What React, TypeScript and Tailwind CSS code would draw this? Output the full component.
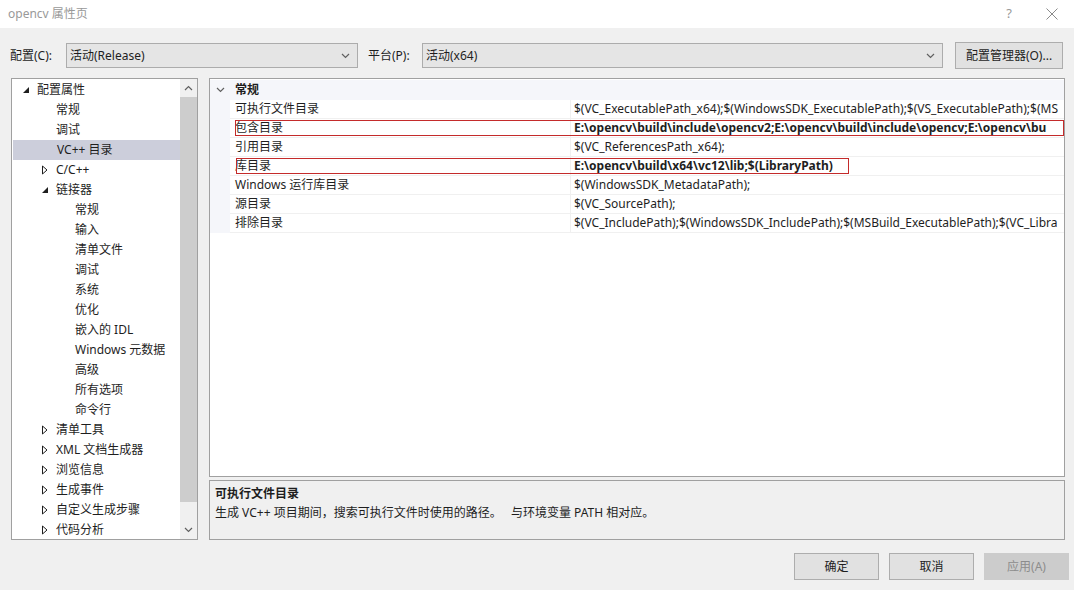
import React from "react";

type TreeItem = {
  label: string;
  level: 0 | 1 | 2;
  toggle?: "open" | "closed";
  selected?: boolean;
};

const treeItems: TreeItem[] = [
  { label: "配置属性", level: 0, toggle: "open" },
  { label: "常规", level: 1 },
  { label: "调试", level: 1 },
  { label: "VC++ 目录", level: 1, selected: true },
  { label: "C/C++", level: 1, toggle: "closed" },
  { label: "链接器", level: 1, toggle: "open" },
  { label: "常规", level: 2 },
  { label: "输入", level: 2 },
  { label: "清单文件", level: 2 },
  { label: "调试", level: 2 },
  { label: "系统", level: 2 },
  { label: "优化", level: 2 },
  { label: "嵌入的 IDL", level: 2 },
  { label: "Windows 元数据", level: 2 },
  { label: "高级", level: 2 },
  { label: "所有选项", level: 2 },
  { label: "命令行", level: 2 },
  { label: "清单工具", level: 1, toggle: "closed" },
  { label: "XML 文档生成器", level: 1, toggle: "closed" },
  { label: "浏览信息", level: 1, toggle: "closed" },
  { label: "生成事件", level: 1, toggle: "closed" },
  { label: "自定义生成步骤", level: 1, toggle: "closed" },
  { label: "代码分析", level: 1, toggle: "closed" },
];

type Prop = { name: string; value: string; bold?: boolean; mark?: "full" | "short" };

// values are cut where the grid's edge cuts them in the dialog
const props: Prop[] = [
  { name: "可执行文件目录", value: "$(VC_ExecutablePath_x64);$(WindowsSDK_ExecutablePath);$(VS_ExecutablePath);$(MS" },
  {
    name: "包含目录",
    value: "E:\\opencv\\build\\include\\opencv2;E:\\opencv\\build\\include\\opencv;E:\\opencv\\bu",
    bold: true,
    mark: "full",
  },
  { name: "引用目录", value: "$(VC_ReferencesPath_x64);" },
  { name: "库目录", value: "E:\\opencv\\build\\x64\\vc12\\lib;$(LibraryPath)", bold: true, mark: "short" },
  { name: "Windows 运行库目录", value: "$(WindowsSDK_MetadataPath);" },
  { name: "源目录", value: "$(VC_SourcePath);" },
  { name: "排除目录", value: "$(VC_IncludePath);$(WindowsSDK_IncludePath);$(MSBuild_ExecutablePath);$(VC_Libra" },
];

const indent = ["pl-[10px]", "pl-[29px]", "pl-[48px]"];

function Chevron({ up = false }: { up?: boolean }) {
  return (
    <svg width="9" height="6" viewBox="0 0 9 6" fill="none" stroke="#606060" strokeWidth="1.2">
      <path d={up ? "M1 5 L4.5 1.5 L8 5" : "M1 1 L4.5 4.5 L8 1"} />
    </svg>
  );
}

function Combo({ value, className }: { value: string; className: string }) {
  return (
    <div className={`flex h-[25px] shrink-0 items-center justify-between border border-[#acacac] bg-[#e5e5e5] pl-[3px] pr-[7px] ${className}`}>
      <span>{value}</span>
      <Chevron />
    </div>
  );
}

function TreeToggle({ kind }: { kind?: "open" | "closed" }) {
  if (kind === "open")
    return (
      <svg width="8" height="8" viewBox="0 0 8 8">
        <path d="M7 1 L7 7 L1 7 Z" fill="#1e1e1e" />
      </svg>
    );
  if (kind === "closed")
    return (
      <svg width="8" height="10" viewBox="0 0 8 10">
        <path d="M1.5 1 L6 5 L1.5 9 Z" fill="none" stroke="#1e1e1e" strokeWidth="1" />
      </svg>
    );
  return null;
}

function Button({ label, disabled = false }: { label: string; disabled?: boolean }) {
  return (
    <div
      className={`flex h-[27px] w-[85px] items-center justify-center border ${
        disabled ? "border-[#cccccc] bg-[#cccccc] text-[#8c8c8c]" : "border-[#adadad] bg-[#e1e1e1] text-[#1e1e1e]"
      }`}
    >
      {label}
    </div>
  );
}

export default function App() {
  return (
    <div
      className="flex h-[590px] w-[1074px] flex-col overflow-hidden bg-[#f0f0f0] text-[12px] text-[#1e1e1e]"
      style={{ fontFamily: '"Noto Sans", "Noto Sans CJK SC", sans-serif' }}
    >
      {/* title bar */}
      <div className="flex h-[28px] shrink-0 items-center justify-between bg-white pl-[8px] pr-[16px] text-[#999999]">
        <span>opencv 属性页</span>
        <div className="flex items-center gap-[34px]">
          <span className="text-[13px]">?</span>
          <svg width="12" height="12" viewBox="0 0 12 12" stroke="#8a8a8a" strokeWidth="1">
            <path d="M0.5 0.5 L11.5 11.5 M11.5 0.5 L0.5 11.5" />
          </svg>
        </div>
      </div>

      {/* config row */}
      <div className="mt-[14px] flex h-[27px] shrink-0 items-center pl-[10px]">
        <span className="w-[56px] shrink-0">配置(C):</span>
        <Combo value="活动(Release)" className="w-[292px]" />
        <span className="ml-[10px] w-[54px] shrink-0">平台(P):</span>
        <Combo value="活动(x64)" className="w-[521px]" />
        <div className="ml-[12px] flex h-[27px] w-[108px] shrink-0 items-center justify-center border border-[#adadad] bg-[#e1e1e1]">
          配置管理器(O)...
        </div>
      </div>

      {/* main */}
      <div className="mt-[9px] flex h-[462px] shrink-0 gap-[11px] pl-[11px] pr-[9px]">
        {/* tree */}
        <div className="flex w-[187px] shrink-0 border border-[#a0a0a0] bg-white">
          <div className="min-w-0 flex-1 overflow-hidden pt-[1px]">
            {treeItems.map((it, i) => (
              <div
                key={i}
                className={`flex h-[20px] items-center ${indent[it.level]} ${it.selected ? "ml-[1px] bg-[#cccedb]" : ""}`}
              >
                <span className="flex w-[15px] shrink-0 items-center">
                  <TreeToggle kind={it.toggle} />
                </span>
                <span className="whitespace-nowrap">{it.label}</span>
              </div>
            ))}
          </div>
          <div className="flex w-[17px] shrink-0 flex-col items-center bg-[#f0f0f0]">
            <div className="flex h-[18px] items-center">
              <Chevron up />
            </div>
            <div className="h-[405px] w-[17px] bg-[#cdcdcd]" />
            <div className="flex-1" />
            <div className="flex h-[18px] items-center">
              <Chevron />
            </div>
          </div>
        </div>

        {/* right column */}
        <div className="flex min-w-0 flex-1 flex-col gap-[3px]">
          <div className="h-[399px] overflow-hidden border border-[#a0a0a0] bg-white pt-[1px]">
            <div className="flex h-[20px] items-center bg-[#f5f6fa]">
              <span className="flex w-[20px] justify-center">
                <Chevron />
              </span>
              <span className="pl-[5px] font-bold">常规</span>
            </div>
            <div className="flex">
              <div className="w-[20px] shrink-0 bg-[#f5f6fa]" />
              <div className="min-w-0 flex-1">
                {props.map((p, i) => (
                  <div key={i} className="relative flex h-[19px] items-center border-b border-[#f0f0f0]">
                    <div className="w-[340px] shrink-0 whitespace-nowrap pl-[5px]">{p.name}</div>
                    <div
                      className={`min-w-0 flex-1 overflow-hidden whitespace-nowrap border-l border-[#f0f0f0] pl-[3px] ${
                        p.bold ? "font-bold" : ""
                      }`}
                    >
                      {p.value}
                    </div>
                    {p.mark === "full" && (
                      <div className="absolute left-[5px] right-0 top-[1px] h-[16px] border border-[#c42b2b]" />
                    )}
                    {p.mark === "short" && (
                      <div className="absolute left-[6px] top-[1px] h-[16px] w-[613px] border border-[#c42b2b]" />
                    )}
                  </div>
                ))}
              </div>
            </div>
          </div>

          <div className="flex h-[60px] flex-col border border-[#a0a0a0] bg-[#f0f0f0] pl-[5px] pt-[3px]">
            <div className="h-[19px] font-bold leading-[19px]">可执行文件目录</div>
            <div className="h-[19px] whitespace-pre leading-[19px]">生成 VC++ 项目期间，搜索可执行文件时使用的路径。   与环境变量 PATH 相对应。</div>
          </div>
        </div>
      </div>

      {/* buttons */}
      <div className="mt-[13px] flex shrink-0 justify-end gap-[10px] pr-[5px]">
        <Button label="确定" />
        <Button label="取消" />
        <Button label="应用(A)" disabled />
      </div>
    </div>
  );
}
